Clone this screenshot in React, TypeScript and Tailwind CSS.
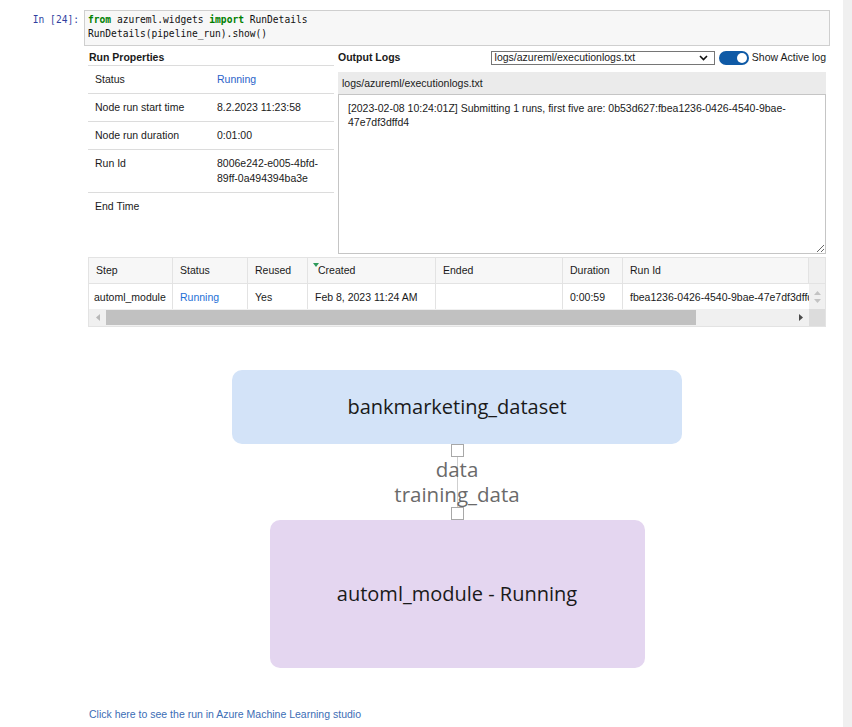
import React from "react";

const propRows: { label: string; value: string; blue?: boolean; h?: string }[] = [
  { label: "Status", value: "Running", blue: true },
  { label: "Node run start time", value: "8.2.2023 11:23:58" },
  { label: "Node run duration", value: "0:01:00" },
  { label: "Run Id", value: "8006e242-e005-4bfd-89ff-0a494394ba3e" },
  { label: "End Time", value: "", h: "h-[62px] border-b-0" },
];

const headers = ["Step", "Status", "Reused", "Created", "Ended", "Duration", "Run Id"];
const row = ["automl_module", "Running", "Yes", "Feb 8, 2023 11:24 AM", "", "0:00:59", "fbea1236-0426-4540-9bae-47e7df3dffd4"];

const logText =
  "[2023-02-08 10:24:01Z] Submitting 1 runs, first five are: 0b53d627:fbea1236-0426-4540-9bae-47e7df3dffd4";

const App = () => {
  return (
    <div className="flex h-[727px] w-full overflow-hidden bg-white font-['Liberation_Sans',Arial,sans-serif] text-[10.5px] text-[#1a1a1a]">
      <div className="flex-1">
        {/* code cell */}
        <div className="mt-[10px] flex">
          <div className="w-[84px] pt-[3px] pr-[5px] text-right font-['DejaVu_Sans_Mono',monospace] text-[9.6px] leading-[14px] text-[#303f9f]">
            In [24]:
          </div>
          <div className="h-[36px] w-[746px] border border-[#cfcfcf] bg-[#f7f7f7] pt-[2px] pl-[3px] font-['DejaVu_Sans_Mono',monospace] text-[9.6px] leading-[14px] text-[#111]">
            <div>
              <span className="font-bold text-[#008000]">from</span> azureml.widgets{" "}
              <span className="font-bold text-[#008000]">import</span> RunDetails
            </div>
            <div>RunDetails(pipeline_run).show()</div>
          </div>
        </div>

        {/* widget */}
        <div className="mt-[4px] ml-[88px] w-[738px]">
          <div className="flex">
            <div className="w-[246px]">
              <div className="h-[15px] pl-[1px] text-[10.5px] font-bold leading-[15px]">Run Properties</div>
              <div className="border-t border-[#dcdcdc]">
                {propRows.map((r) => (
                  <div
                    key={r.label}
                    className={`grid grid-cols-[122px_1fr] border-b border-[#dcdcdc] pt-[6px] pb-[6px] pl-[7px] leading-[15px] ${r.h ?? ""}`}
                  >
                    <div>{r.label}</div>
                    <div className={`pr-[8px] ${r.blue ? "text-[#2a62c9]" : ""}`}>{r.value}</div>
                  </div>
                ))}
              </div>
            </div>

            <div className="ml-[4px] w-[488px]">
              <div className="flex h-[15px] items-center">
                <div className="w-[153px] font-bold">Output Logs</div>
                <div className="flex h-[14px] w-[225px] items-center justify-between border border-[#767676] pl-[3px] pr-[6px]">
                  <span>logs/azureml/executionlogs.txt</span>
                  <svg width="9" height="6" viewBox="0 0 9 6">
                    <path d="M1 1 L4.5 4.5 L8 1" fill="none" stroke="#111" strokeWidth="1.6" />
                  </svg>
                </div>
                <div className="ml-[4px] flex h-[14px] w-[30px] items-center justify-end rounded-full bg-[#0f5aa6] pr-[2px]">
                  <div className="h-[10px] w-[10px] rounded-full bg-white" />
                </div>
                <div className="ml-[3px] whitespace-nowrap">Show Active log</div>
              </div>
              <div className="mt-[7px] h-[22px] bg-[#ebebeb] pl-[4px] leading-[22px]">logs/azureml/executionlogs.txt</div>
              <textarea
                readOnly
                value={logText}
                className="block h-[160px] w-full resize-y border border-[#c5c5c5] bg-white px-[9px] pt-[6px] text-[10.5px] leading-[14px] text-[#1a1a1a] outline-none"
              />
            </div>
          </div>

          {/* steps table */}
          <div className="mt-[2px] border border-[#e3e3e3]">
            <div className="grid h-[25px] grid-cols-[84px_75px_60px_128px_127px_60px_186px_16px] bg-[#f7f7f7] leading-[25px]">
              {headers.map((h) => (
                <div key={h} className="relative border-r border-[#e3e3e3] pl-[7px]">
                  {h === "Created" && (
                    <svg className="absolute top-[5px] left-[5px]" width="6" height="4" viewBox="0 0 6 4">
                      <path d="M0 0 L6 0 L3 4 Z" fill="#2e9a5a" />
                    </svg>
                  )}
                  {h === "Created" ? <span className="pl-[3px]">{h}</span> : h}
                </div>
              ))}
              <div className="bg-[#f0f0f0]" />
            </div>
            <div className="grid h-[26px] grid-cols-[84px_75px_60px_128px_127px_60px_186px_16px] border-t border-[#e3e3e3] leading-[26px]">
              {row.map((c, i) => (
                <div
                  key={i}
                  className={`overflow-hidden whitespace-nowrap border-r border-[#e3e3e3] ${i === 0 ? "pl-[5px]" : "pl-[7px]"} ${i === 1 ? "text-[#1d6fd6]" : ""} ${i === 6 ? "border-r-0" : ""}`}
                >
                  {c}
                </div>
              ))}
              <div className="flex flex-col items-center justify-center gap-[4px] bg-[#f0f0f0]">
                <svg width="7" height="4" viewBox="0 0 7 4">
                  <path d="M0 4 L3.5 0 L7 4 Z" fill="#c3c3c3" />
                </svg>
                <svg width="7" height="4" viewBox="0 0 7 4">
                  <path d="M0 0 L3.5 4 L7 0 Z" fill="#c3c3c3" />
                </svg>
              </div>
            </div>
            <div className="flex h-[17px] bg-[#f0f0f0]">
              <div className="flex w-[17px] items-center justify-center">
                <svg width="4" height="7" viewBox="0 0 4 7">
                  <path d="M4 0 L0 3.5 L4 7 Z" fill="#b8b8b8" />
                </svg>
              </div>
              <div className="my-[1px] w-[590px] bg-[#c1c1c1]" />
              <div className="flex-1" />
              <div className="flex w-[17px] items-center justify-center">
                <svg width="4" height="7" viewBox="0 0 4 7">
                  <path d="M0 0 L4 3.5 L0 7 Z" fill="#4a4a4a" />
                </svg>
              </div>
              <div className="w-[16px] bg-[#dcdcdc]" />
            </div>
          </div>
        </div>

        {/* graph */}
        <div className="mt-[43px] ml-[232px] flex w-[450px] flex-col items-center font-['Open_Sans','Noto_Sans',sans-serif]">
          <div className="flex h-[74px] w-[450px] items-center justify-center rounded-[10px] bg-[#d3e3f8] text-[20px] font-medium text-[#1a1a1a]">
            bankmarketing_dataset
          </div>
          <div className="h-[13px] w-[13px] border border-[#a8a8a8] bg-white" />
          <div className="relative flex flex-col items-center text-[20.5px] leading-[25px] text-[#6a6a6a]">
            <div className="absolute top-0 bottom-0 left-1/2 w-px bg-[#cfcfcf]" />
            <div className="relative">data</div>
            <div className="relative">training_data</div>
          </div>
          <div className="h-[13px] w-[13px] border border-[#a8a8a8] bg-white" />
          <div className="flex h-[148px] w-[375px] items-center justify-center rounded-[10px] bg-[#e4d6f0] text-[20px] font-medium text-[#1a1a1a]">
            automl_module - Running
          </div>
        </div>

        <div className="mt-[39px] ml-[89px] text-[10.5px] leading-[14px] text-[#3b6db5]">
          Click here to see the run in Azure Machine Learning studio
        </div>
      </div>
      <div className="w-[9px] bg-[#f0f0f0]" />
    </div>
  );
};

export default App;
